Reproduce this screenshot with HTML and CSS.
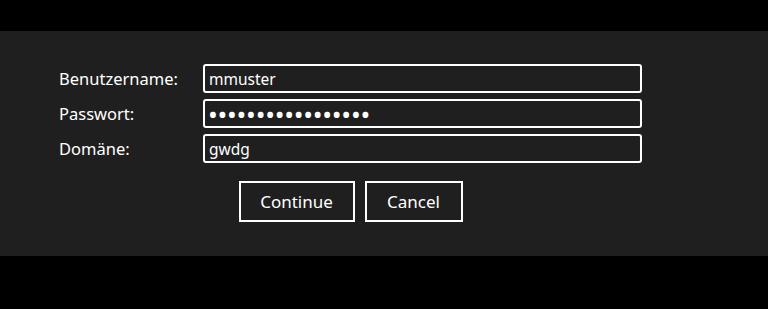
FILE: index.html
```html
<!DOCTYPE html>
<html lang="de">
<head>
    <meta charset="UTF-8">
    <meta name="viewport" content="width=device-width, initial-scale=1.0">
    <title>Anmeldung</title>
    <link rel="stylesheet" href="styles.css">
</head>
<body>
    <div class="panel">
        <form class="login" id="loginForm">
            <div class="fields">
                <label for="user">Benutzername:</label>
                <input type="text" id="user" value="mmuster">
                <label for="pass">Passwort:</label>
                <input type="password" id="pass" class="secret" value="geheimespasswort1">
                <label for="domain">Domäne:</label>
                <input type="text" id="domain" value="gwdg">
            </div>
            <div class="actions">
                <button type="submit" class="btn-continue">Continue</button>
                <button type="button" class="btn-cancel">Cancel</button>
            </div>
        </form>
    </div>
</body>
</html>
```

FILE: styles.css
```css
body {
    margin: 0;
    padding-top: 31px;
    background-color: #000;
    font-family: "Noto Sans", "Open Sans", sans-serif;
    font-size: 16px;
    color: #fff;
}

.panel {
    height: 225px;
    box-sizing: border-box;
    background-color: #1f1f1f;
    padding: 33px 0 0 59px;
}

.login {
    width: 583px;
}

.fields {
    display: grid;
    grid-template-columns: 144px 1fr;
    row-gap: 6px;
    align-items: center;
}

label {
    font-size: 16.5px;
    line-height: 29px;
}

input {
    height: 29px;
    box-sizing: border-box;
    margin: 0;
    padding: 0 4px;
    border: 2px solid #fff;
    border-radius: 3px;
    background-color: #1f1f1f;
    color: #fff;
    font-family: inherit;
    font-size: 15.5px;
}

input.secret {
    font-size: 26px;
    letter-spacing: -0.25px;
    padding-left: 3px;
}

.actions {
    display: flex;
    justify-content: center;
    gap: 10px;
    margin-top: 18px;
}

button {
    height: 41px;
    box-sizing: border-box;
    border: 2px solid #fff;
    border-radius: 0;
    background-color: #1f1f1f;
    color: #fff;
    font-family: inherit;
    font-size: 17px;
    cursor: pointer;
}

.btn-continue { width: 116px; }
.btn-cancel { width: 98px; }
```
